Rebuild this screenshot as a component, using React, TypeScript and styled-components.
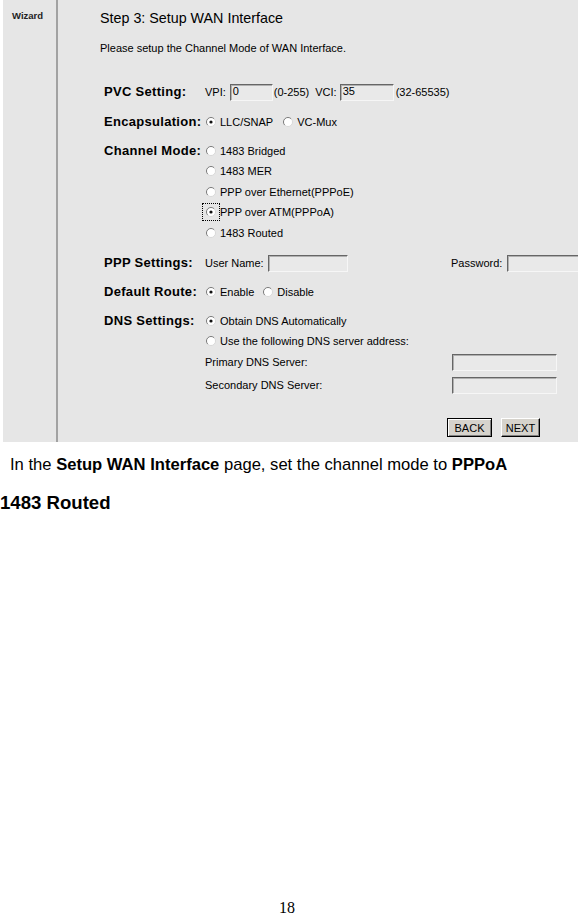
import React from "react";
import styled, { createGlobalStyle } from "styled-components";

const GlobalStyle = createGlobalStyle`
  html, body {
    margin: 0;
    padding: 0;
    background: #ffffff;
  }
  body {
    font-family: "Liberation Sans", Arial, sans-serif;
    color: #000000;
  }
`;

const Page = styled.div`
  width: 578px;
  min-height: 920px;
  display: flex;
  flex-direction: column;
  overflow: hidden;
`;

const Panel = styled.div`
  margin-left: 3px;
  width: 575px;
  height: 442px;
  background: #e6e6e6;
  display: flex;
  overflow: hidden;
`;

const Sidebar = styled.div`
  width: 55px;
  flex-shrink: 0;
  border-right: 2px solid #a2a2a2;
  padding: 11px 0 0 9px;
  box-sizing: border-box;
`;

const SideTitle = styled.div`
  font-size: 9.5px;
  font-weight: 700;
  line-height: 10px;
  color: #222;
`;

const Main = styled.div`
  flex: 1;
  padding: 10px 0 0 42px;
  min-width: 0;
`;

const Title = styled.div`
  font-size: 14.3px;
  line-height: 16px;
  white-space: nowrap;
`;

const Intro = styled.div`
  margin-top: 16px;
  font-size: 11px;
  line-height: 12px;
  white-space: nowrap;
`;

const Form = styled.div`
  margin: 28px 0 0 4px;
  display: flex;
  flex-direction: column;
`;

const FieldRow = styled.div<{ $gap?: number }>`
  display: grid;
  grid-template-columns: 101px 1fr;
  margin-top: ${({ $gap }) => $gap ?? 0}px;
`;

const Label = styled.div`
  font-size: 13px;
  font-weight: 700;
  letter-spacing: 0.3px;
  line-height: 20px;
  white-space: nowrap;
`;

const Values = styled.div`
  display: flex;
  flex-direction: column;
`;

const Line = styled.div<{ $h?: number }>`
  display: flex;
  align-items: center;
  height: ${({ $h }) => $h ?? 20}px;
  font-size: 11px;
  white-space: nowrap;
`;

const Text = styled.span<{ $ml?: number }>`
  margin-left: ${({ $ml }) => $ml ?? 0}px;
`;

const FieldText = styled.span<{ $w?: number; $ml?: number }>`
  display: inline-block;
  width: ${({ $w }) => ($w ? `${$w}px` : "auto")};
  margin-left: ${({ $ml }) => $ml ?? 0}px;
  flex-shrink: 0;
`;

const Option = styled.label<{ $ml?: number }>`
  display: inline-flex;
  align-items: center;
  margin-left: ${({ $ml }) => $ml ?? 1}px;
`;

const RadioMark = styled.span<{ $focus?: boolean }>`
  display: inline-flex;
  width: 10px;
  height: 10px;
  margin-right: 4px;
  outline: ${({ $focus }) => ($focus ? "1px dotted #000" : "none")};
  outline-offset: 3px;
`;

const TextBox = styled.span<{ $w: number; $ml?: number }>`
  display: inline-block;
  box-sizing: border-box;
  width: ${({ $w }) => $w}px;
  height: 17px;
  margin-left: ${({ $ml }) => $ml ?? 0}px;
  flex-shrink: 0;
  background: #e9e9e9;
  border-top: 1px solid #666;
  border-left: 1px solid #666;
  border-right: 1px solid #f6f6f6;
  border-bottom: 1px solid #f6f6f6;
  box-shadow: inset 1px 1px 0 #b0b0b0;
  font-size: 11px;
  line-height: 12px;
  padding-left: 2px;
`;

const ButtonBar = styled.div`
  display: flex;
  gap: 9px;
  margin: 21px 0 0 242px;
`;

const WinButton = styled.span<{ $w: number; $default?: boolean }>`
  display: inline-flex;
  align-items: center;
  justify-content: center;
  box-sizing: border-box;
  width: ${({ $w }) => $w}px;
  height: 19px;
  font-size: 11px;
  background: #d6d3cc;
  border: 1px solid ${({ $default }) => ($default ? "#000" : "#fff")};
  border-right-color: #000;
  border-bottom-color: #000;
  box-shadow: ${({ $default }) =>
    $default
      ? "inset 1px 1px 0 #fff, inset -1px -1px 0 #808080"
      : "inset -1px -1px 0 #808080"};
`;

const Caption = styled.p`
  margin: 14px 0 0 10px;
  font-size: 16.6px;
  line-height: 18px;
  white-space: nowrap;
`;

const Heading = styled.h3`
  margin: 19px 0 0 0;
  font-size: 18.6px;
  font-weight: 700;
  line-height: 20px;
`;

const PageNumber = styled.div`
  margin-top: auto;
  padding: 0 4px 2px 0;
  text-align: center;
  font-family: "Liberation Serif", "Times New Roman", serif;
  font-size: 16px;
  line-height: 20px;
`;

function Radio({ checked, focus }: { checked?: boolean; focus?: boolean }) {
  return (
    <RadioMark $focus={focus}>
      <svg width="10" height="10" viewBox="0 0 10 10">
        <circle cx="5" cy="5" r="4.5" fill="#fff" />
        <path d="M1.8 8.2 A4.5 4.5 0 0 1 8.2 1.8" stroke="#7a7a7a" fill="none" />
        <path d="M8.2 1.8 A4.5 4.5 0 0 1 1.8 8.2" stroke="#d8d8d8" fill="none" />
        {checked && <circle cx="5" cy="5" r="1.6" fill="#111" />}
      </svg>
    </RadioMark>
  );
}

export default function App() {
  return (
    <>
      <GlobalStyle />
      <Page>
        <Panel>
          <Sidebar>
            <SideTitle>Wizard</SideTitle>
          </Sidebar>
          <Main>
            <Title>Step 3: Setup WAN Interface</Title>
            <Intro>Please setup the Channel Mode of WAN Interface.</Intro>
            <Form>
              <FieldRow>
                <Label>PVC Setting:</Label>
                <Values>
                  <Line>
                    <Text>VPI:</Text>
                    <TextBox $w={43} $ml={4}>0</TextBox>
                    <Text $ml={1}>(0-255)</Text>
                    <Text $ml={6}>VCI:</Text>
                    <TextBox $w={54} $ml={3}>35</TextBox>
                    <Text $ml={2}>(32-65535)</Text>
                  </Line>
                </Values>
              </FieldRow>

              <FieldRow $gap={10}>
                <Label>Encapsulation:</Label>
                <Values>
                  <Line>
                    <Option>
                      <Radio checked />
                      LLC/SNAP
                    </Option>
                    <Option $ml={10}>
                      <Radio />
                      VC-Mux
                    </Option>
                  </Line>
                </Values>
              </FieldRow>

              <FieldRow $gap={9}>
                <Label>Channel Mode:</Label>
                <Values>
                  <Line>
                    <Option>
                      <Radio />
                      1483 Bridged
                    </Option>
                  </Line>
                  <Line $h={20.5}>
                    <Option>
                      <Radio />
                      1483 MER
                    </Option>
                  </Line>
                  <Line $h={20.5}>
                    <Option>
                      <Radio />
                      PPP over Ethernet(PPPoE)
                    </Option>
                  </Line>
                  <Line $h={20.5}>
                    <Option>
                      <Radio checked focus />
                      PPP over ATM(PPPoA)
                    </Option>
                  </Line>
                  <Line $h={20.5}>
                    <Option>
                      <Radio />
                      1483 Routed
                    </Option>
                  </Line>
                </Values>
              </FieldRow>

              <FieldRow $gap={10}>
                <Label>PPP Settings:</Label>
                <Values>
                  <Line>
                    <FieldText $w={63}>User Name:</FieldText>
                    <TextBox $w={80} />
                    <FieldText $w={56} $ml={103}>
                      Password:
                    </FieldText>
                    <TextBox $w={80} />
                  </Line>
                </Values>
              </FieldRow>

              <FieldRow $gap={9}>
                <Label>Default Route:</Label>
                <Values>
                  <Line>
                    <Option>
                      <Radio checked />
                      Enable
                    </Option>
                    <Option $ml={9}>
                      <Radio />
                      Disable
                    </Option>
                  </Line>
                </Values>
              </FieldRow>

              <FieldRow $gap={9}>
                <Label>DNS Settings:</Label>
                <Values>
                  <Line>
                    <Option>
                      <Radio checked />
                      Obtain DNS Automatically
                    </Option>
                  </Line>
                  <Line>
                    <Option>
                      <Radio />
                      Use the following DNS server address:
                    </Option>
                  </Line>
                  <Line $h={22}>
                    <FieldText $w={247}>Primary DNS Server:</FieldText>
                    <TextBox $w={105} />
                  </Line>
                  <Line $h={24}>
                    <FieldText $w={247}>Secondary DNS Server:</FieldText>
                    <TextBox $w={105} />
                  </Line>
                  <ButtonBar>
                    <WinButton $w={45} $default>
                      BACK
                    </WinButton>
                    <WinButton $w={39}>NEXT</WinButton>
                  </ButtonBar>
                </Values>
              </FieldRow>
            </Form>
          </Main>
        </Panel>

        <Caption>
          In the <b>Setup WAN Interface</b> page, set the channel mode to{" "}
          <b>PPPoA</b>
        </Caption>
        <Heading>1483 Routed</Heading>
        <PageNumber>18</PageNumber>
      </Page>
    </>
  );
}
